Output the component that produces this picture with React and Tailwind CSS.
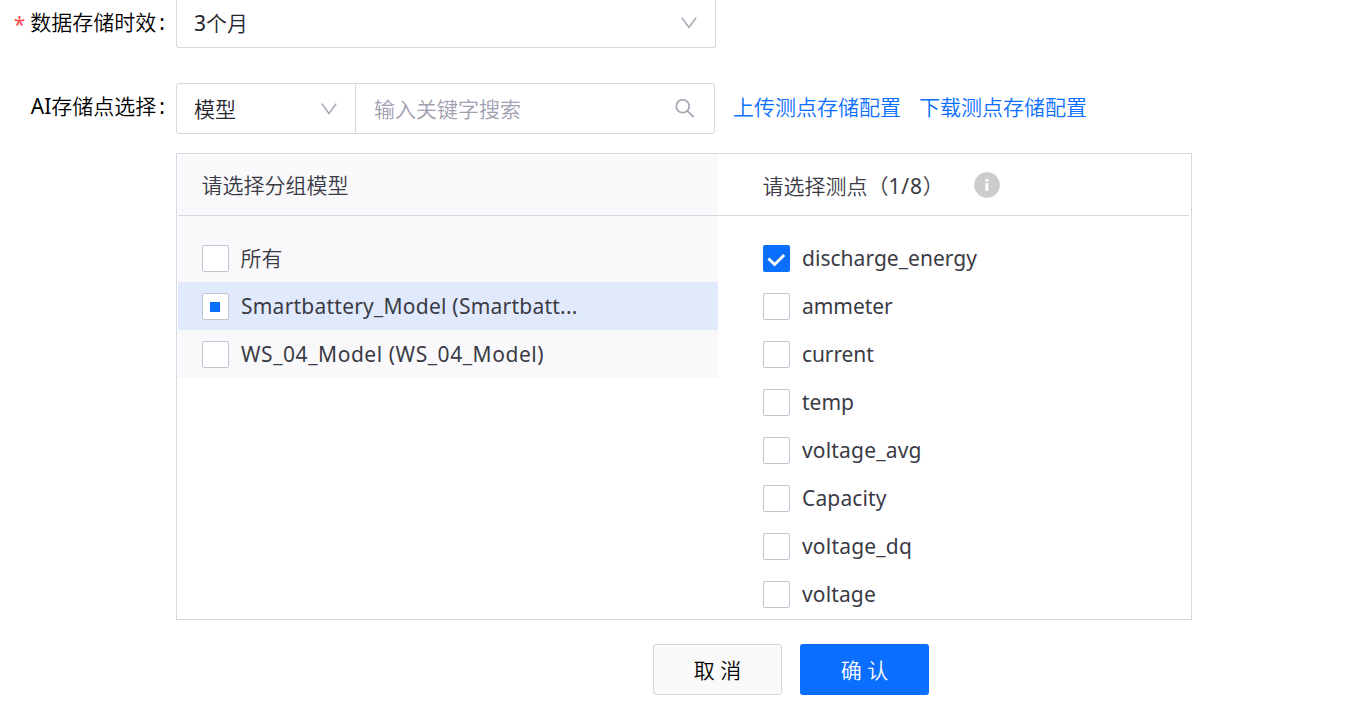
const MODELS = [
  { label: "所有", state: "empty", text: "-ml-[0.5px]" },
  { label: "Smartbattery_Model (Smartbatt...", state: "partial", text: "font-normal tracking-[0.23px]" },
  { label: "WS_04_Model (WS_04_Model)", state: "empty", text: "font-normal tracking-[0.55px]" },
];

const POINTS = [
  { label: "discharge_energy", state: "checked", text: "font-normal tracking-[0.03px]" },
  { label: "ammeter", state: "empty", text: "font-normal tracking-[-0.05px]" },
  { label: "current", state: "empty", text: "font-normal tracking-[-0.1px]" },
  { label: "temp", state: "empty", text: "font-normal" },
  { label: "voltage_avg", state: "empty", text: "font-normal tracking-[0.18px]" },
  { label: "Capacity", state: "empty", text: "font-normal tracking-[0.14px]" },
  { label: "voltage_dq", state: "empty", text: "font-normal tracking-[0.2px]" },
  { label: "voltage", state: "empty", text: "font-normal tracking-[0.14px]" },
];

function Chevron() {
  return (
    <svg width="16" height="12" viewBox="0 0 16 12" fill="none" stroke="#a5a5b4" strokeWidth="1.5" className="shrink-0">
      <path d="M0.8 0.6 L8 10.4 L15.2 0.6" />
    </svg>
  );
}

function SearchIcon() {
  return (
    <svg width="20" height="20" viewBox="0 0 20 20" fill="none" stroke="#a5a5b4" strokeWidth="1.7" className="shrink-0">
      <circle cx="7.7" cy="7.2" r="6.5" />
      <path d="M12.4 11.9 L18.7 18.2" />
    </svg>
  );
}

function InfoIcon() {
  return (
    <svg width="26" height="26" viewBox="0 0 26 26" className="mt-px shrink-0">
      <circle cx="13" cy="13" r="12.8" fill="#ccc" />
      <rect x="11.4" y="7" width="3" height="2.8" fill="#fff" />
      <rect x="11.4" y="11.2" width="3" height="7.6" fill="#fff" />
    </svg>
  );
}

function Checkbox({ state }) {
  if (state === "checked") {
    return (
      <span className="flex h-[27px] w-[27px] shrink-0 rounded-[2px] bg-[#0a6eff]">
        <svg width="27" height="27" viewBox="0 0 27 27" fill="none" stroke="#fff" strokeWidth="2.8">
          <path d="M5.4 13.6 L11.6 19.6 L21.2 10" />
        </svg>
      </span>
    );
  }
  return (
    <span className="flex h-[27px] w-[27px] shrink-0 items-center rounded-[2px] border border-[#c4c4d3] bg-white pl-[7px]">
      {state === "partial" && <span className="mt-px h-[10px] w-[10px] bg-[#0a6eff]" />}
    </span>
  );
}

function Row({ item, className }) {
  return (
    <li className={"flex h-12 items-center gap-3 whitespace-nowrap pl-6 " + className}>
      <Checkbox state={item.state} />
      <span className={item.text}>{item.label}</span>
    </li>
  );
}

export default function App() {
  return (
    <div className="h-[707px] w-[1362px] overflow-hidden bg-white font-['Noto_Sans','Noto_Sans_CJK_SC',sans-serif] text-[21px] leading-[30px] font-[350] text-[#3b3b45]">
      <div className="flex h-12">
        <div className="flex w-44 shrink-0 justify-end pt-[7px] pr-[11px] text-black">
          <span className="mr-[5px] pt-[2px] font-normal text-[#ff4d4f]">*</span>
          <span>数据存储时效</span>
          <span className="ml-[3px] font-normal">:</span>
        </div>
        <div className="flex w-[540px] justify-between rounded-b-[3px] border border-t-0 border-[#d7d7e0] pr-[18px] pl-[17px]">
          <span className="pt-2 text-[#26262e]"><span className="font-normal">3</span>个月</span>
          <span className="pt-[17px]"><Chevron /></span>
        </div>
      </div>

      <div className="mt-[35px] flex h-[51px]">
        <div className="flex w-44 shrink-0 justify-end pt-2 pr-[11px] text-black">
          <span className="font-normal">AI</span>
          <span>存储点选择</span>
          <span className="ml-[3px] font-normal">:</span>
        </div>
        <div className="flex w-[539px] rounded-[3px] border border-[#d7d7e0]">
          <div className="flex w-[179px] items-center justify-between border-r border-[#d7d7e0] pr-[18px] pl-[17px]">
            <span className="text-[#26262e]">模型</span>
            <Chevron />
          </div>
          <div className="flex flex-1 items-center justify-between pr-[19px] pl-[18px]">
            <span className="text-[#a0a0b0]">输入关键字搜索</span>
            <SearchIcon />
          </div>
        </div>
        <div className="flex gap-[18px] pt-[9px] pl-[18px] text-[#0a6eff]">
          <a>上传测点存储配置</a>
          <a>下载测点存储配置</a>
        </div>
      </div>

      <div className="mt-[19px] ml-44 flex h-[467px] w-[1016px] border border-[#d7d7e0] p-px">
        <section className="w-[540px]">
          <h2 className="h-[61px] border-b border-[#d7d7e0] bg-[#f9f9fb] pt-[15px] pl-[23.5px]">请选择分组模型</h2>
          <ul className="bg-[#f9f9fb] pt-[18px]">
            {MODELS.map((m) => (
              <Row key={m.label} item={m} className={m.state === "partial" ? "bg-[#e1eafc]" : ""} />
            ))}
          </ul>
        </section>
        <section className="w-[471px]">
          <h2 className="flex h-[61px] border-b border-[#d7d7e0] pt-4 pl-[44.5px]">
            <span className="w-[211px]">请选择测点（<span className="font-normal tracking-[0.8px]">1/8</span>）</span>
            <InfoIcon />
          </h2>
          <ul className="pt-[18px] pl-[21px]">
            {POINTS.map((p) => (
              <Row key={p.label} item={p} className="" />
            ))}
          </ul>
        </section>
      </div>

      <div className="mt-6 flex gap-[18px] pl-[653px]">
        <button className="h-[51px] w-[129px] rounded-[3px] border border-[#d7d7e0] bg-[#f9f9fa] text-black">取 消</button>
        <button className="h-[51px] w-[129px] rounded-[3px] bg-[#0a6eff] text-white">确 认</button>
      </div>
    </div>
  );
}
